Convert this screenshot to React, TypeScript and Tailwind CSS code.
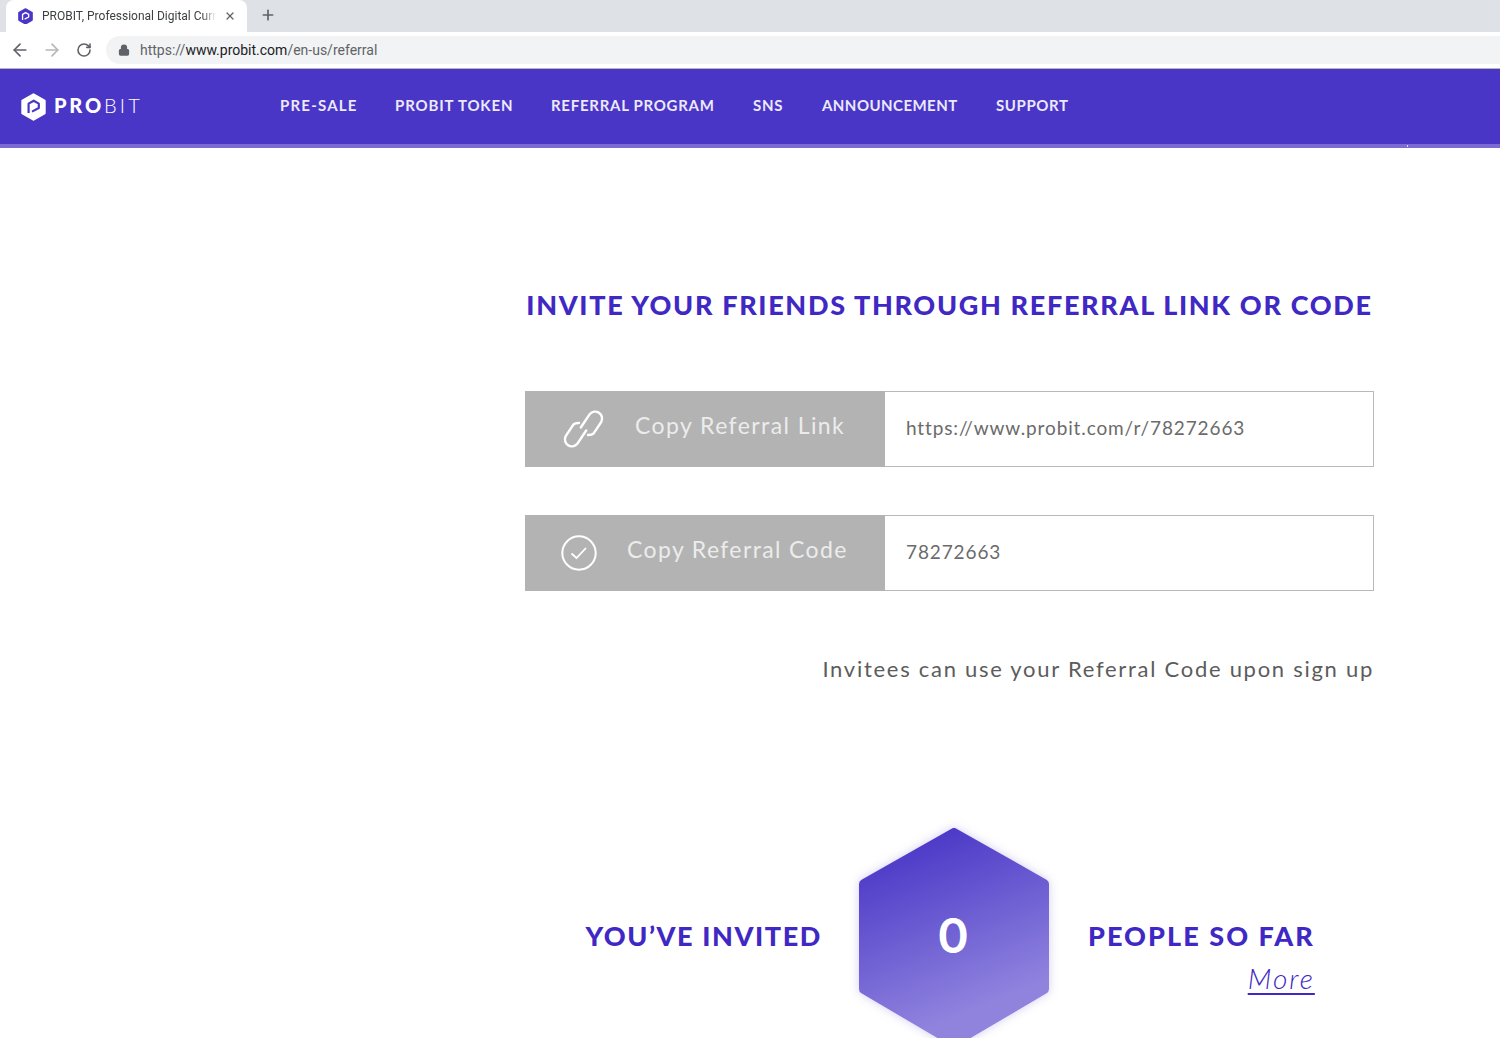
import type { ReactNode } from "react";
import { ArrowLeft, ArrowRight, RotateCw, Lock, Plus, X } from "lucide-react";

function Logo({ size, light }: { size: number; light?: boolean }) {
  return (
    <svg width={size} height={size * 1.12} viewBox="0 0 25 28" className="shrink-0">
      <path d="M12.5 1.5 L23.5 7.8 V20.2 L12.5 26.5 L1.5 20.2 V7.8 Z" fill={light ? "#fff" : "#4a36c6"} stroke={light ? "#fff" : "#4a36c6"} strokeWidth="2.4" strokeLinejoin="round" />
      <path d="M7.6 20 V10.6 L12.7 7.7 L17.8 10.6 V15 L11 18.6" fill="none" stroke={light ? "#4a36c6" : "#fff"} strokeWidth="2.2" strokeLinejoin="round" />
    </svg>
  );
}

const nav = [
  { t: "PRE-SALE", c: "w-[77px] tracking-[1.2px]" },
  { t: "PROBIT TOKEN", c: "w-[118px] tracking-[0.85px]" },
  { t: "REFERRAL PROGRAM", c: "w-[164px] tracking-[0.72px]" },
  { t: "SNS", c: "w-[31px] tracking-[0.72px]" },
  { t: "ANNOUNCEMENT", c: "w-[136px] tracking-[0.45px]" },
  { t: "SUPPORT", c: "w-[72px] tracking-[0.6px]" },
];

function LinkIcon() {
  return (
    <svg width="56" height="52" viewBox="0 0 56 52" fill="none" stroke="#fff" strokeWidth="2.4" strokeLinecap="round">
      <path d="M25.8 25.5 L34.7 12.15 A7 7 0 0 1 46.3 19.85 L38.6 31.5 Q36.5 33.2 33 33" />
      <path d="M31.2 28.5 L22.3 41.85 A7 7 0 0 1 10.7 34.15 L18.4 22.5 Q20.5 20.8 24 21" />
    </svg>
  );
}

function CheckIcon() {
  return (
    <svg width="36" height="36" viewBox="0 0 36 36" fill="none" stroke="#fff" strokeWidth="2">
      <circle cx="18" cy="18" r="16.7" />
      <path d="M10.5 18.5 L15.5 23 L25 13" strokeWidth="1.8" />
    </svg>
  );
}

function ReferralRow({ label, value, icon, iconClass, labelClass }: { label: string; value: string; icon: ReactNode; iconClass: string; labelClass: string }) {
  return (
    <div className="flex h-[76px] w-[849px]">
      <div className="relative flex h-full w-[360px] shrink-0 items-center bg-[#b3b3b3]">
        <div className={iconClass}>{icon}</div>
        <span className={labelClass}>{label}</span>
      </div>
      <div className="flex flex-1 items-center border border-l-0 border-[#b9b9b9] pb-[2px] pl-[21px] text-[19px] tracking-[0.88px] text-[#6b6b6b]">
        {value}
      </div>
    </div>
  );
}

export default function App() {
  return (
    <div className="flex h-[1038px] w-[1500px] flex-col overflow-hidden bg-white font-['Lato',sans-serif]">
      {/* Browser tabs */}
      <div className="flex h-8 shrink-0 items-end bg-[#dee1e6] pl-[6px] font-['Roboto',sans-serif]">
        <div className="flex h-[32px] w-[241px] items-center rounded-t-lg bg-white pl-[12px] pr-[11px]">
          <Logo size={15} />
          <span className="ml-[9px] w-[174px] whitespace-nowrap text-[12px] text-[#3c4043] [mask-image:linear-gradient(to_right,#000_160px,transparent_174px)]">
            PROBIT, Professional Digital Curr
          </span>
          <X size={12} strokeWidth={2.4} className="ml-[8px] shrink-0 text-[#5f6368]" />
        </div>
        <Plus size={16} strokeWidth={2.5} className="mb-[9px] ml-[13px] text-[#5f6368]" />
      </div>
      {/* Browser toolbar */}
      <div className="flex h-[37px] shrink-0 items-center border-b border-b-[#b6b6b6] bg-white font-['Roboto',sans-serif]">
        <ArrowLeft size={20} strokeWidth={2} className="ml-[10px] text-[#5f6368]" />
        <ArrowRight size={20} strokeWidth={2} className="ml-[12px] text-[#b4b6b9]" />
        <RotateCw size={16} strokeWidth={2.4} className="ml-[14px] text-[#5f6368]" />
        <div className="ml-[14px] flex h-[28px] flex-1 items-center rounded-l-full bg-[#f1f3f4] pl-[12px]">
          <Lock size={12} fill="#5f6368" strokeWidth={2.5} className="text-[#5f6368]" />
          <span className="ml-[10px] text-[14px] text-[#5f6368]">
            https://<span className="text-[#202124]">www.probit.com</span>/en-us/referral
          </span>
        </div>
      </div>
      {/* Site nav */}
      <nav className="relative flex h-[79px] shrink-0 items-center border-b-4 border-b-[#7d6bd4] bg-[#4a36c6]">
        <div className="flex w-[280px] items-center pl-[21px]">
          <Logo size={25} light />
          <span className="-mt-[3px] ml-[8px] text-[20px] font-black leading-none tracking-[2.8px] text-white">PRO</span>
          <span className="-mt-[3px] text-[20px] font-light leading-none tracking-[3.2px] text-white">BIT</span>
        </div>
        <div className="-mt-[2px] flex gap-[38px] text-[15px] font-bold text-[#ece9fa]">
          {nav.map((n) => (
            <span key={n.t} className={`${n.c} whitespace-nowrap`}>
              {n.t}
            </span>
          ))}
        </div>
        <span className="absolute -bottom-[3px] left-[1407px] h-[2px] w-[1px] bg-[#d9d4f5]" />
      </nav>
      {/* Main */}
      <main className="flex flex-col pl-[525px]">
        <h1 className="mt-[138px] w-[849px] whitespace-nowrap text-center text-[27px] font-black leading-[38px] tracking-[1.67px] text-[#4028c4]">
          INVITE YOUR FRIENDS THROUGH REFERRAL LINK OR CODE
        </h1>
        <div className="mt-[67px] flex flex-col gap-[48px]">
          <ReferralRow
            label="Copy Referral Link"
            value="https://www.probit.com/r/78272663"
            icon={<LinkIcon />}
            iconClass="ml-[30px] mr-[24px] -mt-[2px] w-[56px]"
            labelClass="-mt-[7px] text-[23px] tracking-[1.42px] text-[#ececec]"
          />
          <ReferralRow
            label="Copy Referral Code"
            value="78272663"
            icon={<CheckIcon />}
            iconClass="ml-[36px] mr-[30px] w-[36px]"
            labelClass="-mt-[7px] text-[23px] tracking-[1.38px] text-[#ececec]"
          />
        </div>
        <p className="mt-[61px] w-[849px] text-right text-[22px] leading-[34px] tracking-[1.72px] text-[#5c5c5c]">
          Invitees can use your Referral Code upon sign up
        </p>
        <div className="mt-[140px] flex w-[849px] items-start">
          <div className="mt-[92px] w-[297px] whitespace-nowrap text-right text-[27px] font-black leading-[36px] tracking-[1.6px] text-[#4028c4]">
            YOU’VE INVITED
          </div>
          <div className="relative ml-[37px] h-[224px] w-[192px] shrink-0">
            <svg width="192" height="224" viewBox="0 0 192 224" className="overflow-visible drop-shadow-[0_0_5px_rgba(74,54,198,0.25)]">
              <defs>
                <linearGradient id="hexg" x1="0.32" y1="0.05" x2="0.6" y2="0.85">
                  <stop offset="0" stopColor="#4e3bc8" />
                  <stop offset="1" stopColor="#8f83de" />
                </linearGradient>
              </defs>
              <path d="M95 7 L185 58 V163 L95 216 L5 163 V58 Z" fill="url(#hexg)" stroke="url(#hexg)" strokeWidth="10" strokeLinejoin="round" />
            </svg>
            <span className="absolute left-0 top-[81px] w-[188px] text-center font-['Inter',sans-serif] text-[48px] font-semibold leading-[58px] text-white">
              0
            </span>
          </div>
          <div className="ml-[37px] mt-[92px] flex flex-col items-end">
            <div className="whitespace-nowrap text-[27px] font-black leading-[36px] tracking-[2.05px] text-[#4028c4]">PEOPLE SO FAR</div>
            <a className="mt-[6px] text-[28px] font-light italic leading-[36px] tracking-[2px] text-[#4028c4] underline decoration-2 underline-offset-4">More</a>
          </div>
        </div>
      </main>
    </div>
  );
}
